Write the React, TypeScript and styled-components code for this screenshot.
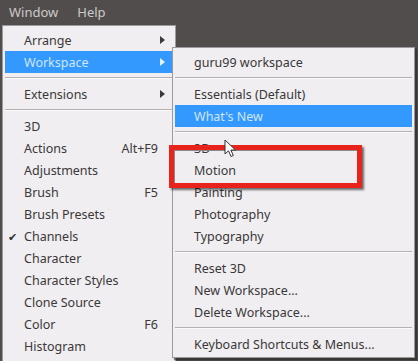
import styled, { createGlobalStyle } from "styled-components";

type Entry =
  | { sep: true }
  | {
      sep?: false;
      label: string;
      shortcut?: string;
      sub?: boolean;
      active?: boolean;
      checked?: boolean;
    };

const mainItems: Entry[] = [
  { label: "Arrange", sub: true },
  { label: "Workspace", sub: true, active: true },
  { sep: true },
  { label: "Extensions", sub: true },
  { sep: true },
  { label: "3D" },
  { label: "Actions", shortcut: "Alt+F9" },
  { label: "Adjustments" },
  { label: "Brush", shortcut: "F5" },
  { label: "Brush Presets" },
  { label: "Channels", checked: true },
  { label: "Character" },
  { label: "Character Styles" },
  { label: "Clone Source" },
  { label: "Color", shortcut: "F6" },
  { label: "Histogram" },
];

const workspaceItems: Entry[] = [
  { label: "guru99 workspace" },
  { sep: true },
  { label: "Essentials (Default)" },
  { label: "What's New", active: true },
  { sep: true },
  { label: "3D" },
  { label: "Motion" },
  { label: "Painting" },
  { label: "Photography" },
  { label: "Typography" },
  { sep: true },
  { label: "Reset 3D" },
  { label: "New Workspace..." },
  { label: "Delete Workspace..." },
  { sep: true },
  { label: "Keyboard Shortcuts & Menus..." },
];

const GlobalStyle = createGlobalStyle`
  html, body {
    margin: 0;
    padding: 0;
    background: #524d4d;
  }
  body {
    font-family: "Noto Sans", "Open Sans", sans-serif;
  }
`;

function MenuList({ items }: { items: Entry[] }) {
  return (
    <>
      {items.map((it, i) =>
        it.sep ? (
          <Separator key={i} />
        ) : (
          <Row key={i} $active={it.active}>
            <Check>{it.checked ? "✔" : ""}</Check>
            <Label>{it.label}</Label>
            {it.shortcut && <Shortcut>{it.shortcut}</Shortcut>}
            {it.sub && <Arrow $active={it.active} />}
          </Row>
        )
      )}
    </>
  );
}

function Pointer() {
  return (
    <Cursor width="14" height="20" viewBox="0 0 14 20">
      <path
        d="M1 1 L1 15 L4.5 11.8 L7 17.5 L9.3 16.5 L6.9 11 L11.5 11 Z"
        fill="#ffffff"
        stroke="#333"
        strokeWidth="1"
        strokeLinejoin="round"
      />
    </Cursor>
  );
}

export default function App() {
  return (
    <Screen>
      <GlobalStyle />
      <MenuBar>
        <BarItem>Window</BarItem>
        <BarItem>Help</BarItem>
      </MenuBar>
      <MainMenu>
        <MenuList items={mainItems} />
      </MainMenu>
      <SubMenu>
        <MenuList items={workspaceItems} />
      </SubMenu>
      <Highlight />
      <Pointer />
    </Screen>
  );
}

const Screen = styled.div`
  position: relative;
  width: 418px;
  height: 361px;
  overflow: hidden;
  background: #524d4d;
`;

const MenuBar = styled.div`
  display: flex;
  align-items: center;
  gap: 19px;
  height: 25px;
  padding-left: 9px;
  font-size: 13px;
  color: #cdc9c9;
`;

const BarItem = styled.span`
  line-height: 25px;
`;

const MainMenu = styled.div`
  display: flex;
  flex-direction: column;
  width: 174px;
  margin-left: 2px;
  padding: 3px 0 20px;
  background: #f0eef0;
  border: 1px solid #9c9a9c;
  box-sizing: border-box;
  height: 360px;
`;

const SubMenu = styled.div`
  position: absolute;
  left: 172px;
  top: 47px;
  width: 243px;
  display: flex;
  flex-direction: column;
  padding: 3px 0 2px;
  background: #f0eef0;
  border: 1px solid #9c9a9c;
  box-shadow: 2px 2px 1px rgba(40, 36, 36, 0.55);
  box-sizing: border-box;
`;

const Row = styled.div<{ $active?: boolean }>`
  display: flex;
  align-items: center;
  height: 22px;
  margin: 0 2px;
  padding-right: 8px;
  font-size: 12.5px;
  color: ${(p) => (p.$active ? "#cfe6ff" : "#3a3838")};
  background: ${(p) => (p.$active ? "#3399ff" : "transparent")};
`;

const Check = styled.span`
  width: 19px;
  padding-left: 3px;
  box-sizing: border-box;
  font-size: 11px;
  color: #333;
`;

const Label = styled.span`
  flex: 1;
  white-space: nowrap;
`;

const Shortcut = styled.span`
  margin-right: 7px;
`;

const Arrow = styled.span<{ $active?: boolean }>`
  width: 0;
  height: 0;
  margin-right: 0;
  border-top: 4px solid transparent;
  border-bottom: 4px solid transparent;
  border-left: 5px solid ${(p) => (p.$active ? "#e8f2ff" : "#3a3838")};
`;

const Separator = styled.div`
  height: 10px;
  display: flex;
  align-items: center;
  margin: 0 2px;
  &::before {
    content: "";
    flex: 1;
    height: 1px;
    background: #b4b0b4;
    border-bottom: 1px solid #fbfafb;
  }
`;

const Highlight = styled.div`
  position: absolute;
  left: 169px;
  top: 145px;
  width: 193px;
  height: 43px;
  box-sizing: border-box;
  border: 5px solid #e8231b;
  box-shadow: 2px 2px 2px rgba(0, 0, 0, 0.55), inset 1px 1px 0 #8a8888;
`;

const Cursor = styled.svg`
  position: absolute;
  left: 224px;
  top: 139px;
`;
